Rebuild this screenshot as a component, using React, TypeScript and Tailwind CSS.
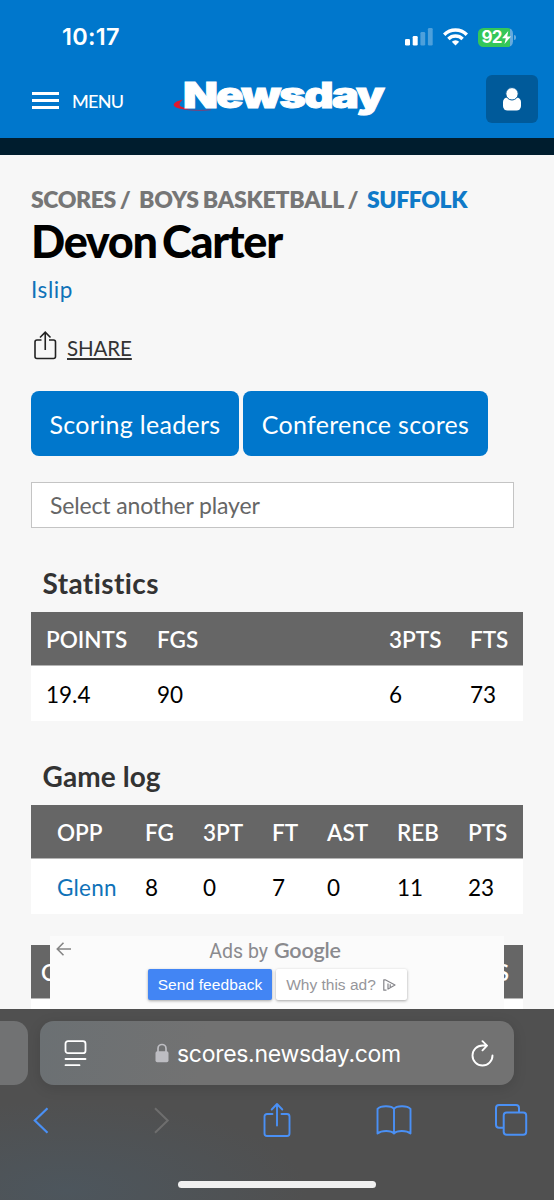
import type { ReactNode } from "react";

const stats = [
  { label: "POINTS", value: "19.4", cell: "w-[111px]" },
  { label: "FGS", value: "90", cell: "w-[232px]" },
  { label: "3PTS", value: "6", cell: "w-[81px]" },
  { label: "FTS", value: "73", cell: "w-[53px]" },
];

const gameLog = [
  { label: "OPP", value: "Glenn", cell: "w-[88px]" },
  { label: "FG", value: "8", cell: "w-[58px]" },
  { label: "3PT", value: "0", cell: "w-[69px]" },
  { label: "FT", value: "7", cell: "w-[55px]" },
  { label: "AST", value: "0", cell: "w-[70px]" },
  { label: "REB", value: "11", cell: "w-[71px]" },
  { label: "PTS", value: "23", cell: "w-[54px]" },
];

function HeadRow({ children }: { children: ReactNode }) {
  return (
    <div className="flex h-[54px] items-center border-b border-[#b5b5b5] bg-[#666] pt-[2px] text-[22.5px] font-semibold text-white">
      {children}
    </div>
  );
}

function StatusBar() {
  return (
    <div className="flex h-[74px] items-center justify-between pl-[62px] pr-[38px]">
      <span className="font-['Inter'] text-[23.5px] font-semibold tracking-[0.3px]">10:17</span>
      <div className="flex items-center">
        <svg width="28" height="18" viewBox="0 0 28 18" fill="#fff">
          <rect x="0" y="11" width="5" height="6.5" rx="1.3" />
          <rect x="7.7" y="8" width="5" height="9.5" rx="1.3" />
          <rect x="15.4" y="4" width="4.8" height="13.5" rx="1.3" opacity="0.3" />
          <rect x="22.9" y="0" width="4.8" height="17.5" rx="1.3" opacity="0.3" />
        </svg>
        <svg className="ml-[10px]" width="25" height="18" viewBox="0 0 25 18" fill="none" stroke="#fff" strokeWidth="3.4">
          <path d="M1.2 6.7a16 16 0 0 1 22.6 0" />
          <path d="M5.4 11a10 10 0 0 1 14.2 0" />
          <path d="M12.5 17.6 8.8 13.8a5.3 5.3 0 0 1 7.4 0Z" fill="#fff" stroke="none" />
        </svg>
        <div className="ml-[10px] flex h-[19px] w-[35px] items-center rounded-[5.5px] bg-[linear-gradient(90deg,#34c759_92%,#66aadd_92%)] pl-[3.5px]">
          <span className="font-['Inter'] text-[17px] font-bold leading-none tracking-[-0.9px]">92</span>
          <svg className="ml-[1px]" width="9" height="13" viewBox="0 0 9 13" fill="#fff">
            <path d="M6.3 0 0 7.3h3.8L2.5 13 9 5.4H5.2Z" />
          </svg>
        </div>
        <span className="ml-[1px] h-[5px] w-[2px] rounded-r-full bg-[#66aadd]" />
      </div>
    </div>
  );
}

function SiteNav() {
  return (
    <div className="flex h-[64px] pl-[32px] pr-[16px]">
      <div className="mt-[18px] flex h-[17px] w-[27px] flex-col justify-between">
        <span className="h-[3px] bg-white" />
        <span className="h-[3px] bg-white" />
        <span className="h-[3px] bg-white" />
      </div>
      <span className="ml-[13px] mt-[14px] w-[60px] text-[18px] font-medium leading-[27px] tracking-[-0.7px]">MENU</span>
      <svg className="ml-[40px]" width="216" height="50" viewBox="172 74 216 50">
        <path
          d="M183 99.5c-6 1.500-9.500 3.500-9.300 5.500.3 2.500 5 3.500 10.300 4.500l5-.8c-6-.8-9.500-2.200-9.500-4.200 0-1.800 1.500-3.300 3.500-5Z"
          fill="#e0182d"
        />
        <path d="M185 109.3c8 1.300 17 1.500 26 .4" fill="none" stroke="#a0315f" strokeWidth="0.8" />
        <text
          x="183"
          y="107.5"
          textLength="200"
          lengthAdjust="spacingAndGlyphs"
          fill="#fff"
          stroke="#fff"
          strokeWidth="0.9"
          className="font-['Inter'] text-[35.5px] font-black tracking-[-1.5px]"
        >
          Newsday
        </text>
      </svg>
      <div className="ml-auto mt-[1px] flex h-[48px] w-[52px] items-center justify-center rounded-[6px] bg-[#005a9a]">
        <svg width="20" height="24" viewBox="0 0 20 24" fill="#fff">
          <rect x="1" y="10.5" width="18" height="13" rx="4.5" />
          <circle cx="10" cy="6.8" r="6.2" stroke="#005a9a" strokeWidth="1" />
        </svg>
      </div>
    </div>
  );
}

function AdNotice() {
  return (
    <div className="absolute left-[50px] top-[781px] h-[73px] w-[454px] bg-[#fbfbfb] font-['Liberation_Sans']">
      <svg className="absolute left-[6px] top-[6px]" width="16" height="14" viewBox="0 0 16 14" fill="none" stroke="#858585" strokeWidth="1.6">
        <path d="M15 7H1.500M7.500 .8 1.300 7l6.200 6.200" />
      </svg>
      <div className="flex h-[31px] items-center justify-center pr-[4px] text-[#8a8a8e]">
        <span className="font-['Roboto'] text-[19.5px]">Ads by</span>
        <span className="-mt-[2px] ml-[6px] font-['Lato'] text-[21.5px] font-semibold tracking-[-0.2px]">Google</span>
      </div>
      <div className="ml-[98px] mt-[2px] flex gap-[4px] text-[15.5px]">
        <div className="flex h-[31px] w-[124px] items-center justify-center rounded-[2px] bg-[#4285f4] text-white shadow-[0_1px_3px_rgba(0,0,0,0.35)]">
          <span className="tracking-[0.1px]">Send feedback</span>
        </div>
        <div className="flex h-[31px] w-[131px] items-center justify-center gap-[7px] rounded-[2px] bg-white pr-[1px] text-[#96969b] shadow-[0_1px_3px_rgba(0,0,0,0.35)]">
          Why this ad?
          <svg width="13" height="12" viewBox="0 0 13 12" fill="none" stroke="#85858a" strokeWidth="1.2" strokeLinejoin="round">
            <path d="M3.500 11.200H.8V.8h1.400L12 6 5 10V4.500M7.200 5.200v2.800" />
          </svg>
        </div>
      </div>
    </div>
  );
}

function Player() {
  return (
    <main className="relative h-[854px] overflow-hidden bg-[#f7f7f7] px-[31px] [font-variant-ligatures:none]">
      <div className="flex h-[61px] pt-[28px] text-[23px] font-extrabold leading-[32px] tracking-[-0.4px] text-[#767676]">
        <span className="w-[108px] [word-spacing:-1px]">SCORES /</span>
        <span className="w-[228px] tracking-[-0.2px] [word-spacing:-1px]">BOYS BASKETBALL /</span>
        <span className="text-[#0f7ac8]">SUFFOLK</span>
      </div>
      <h1 className="h-[50px] text-[45px] font-black leading-[50px] tracking-[-1.3px] text-black [word-spacing:-4px]">
        Devon Carter
      </h1>
      <div className="mt-[8px] text-[22.5px] leading-[31px] tracking-[0.6px] text-[#0f72b8]">Islip</div>
      <div className="mt-[26px] flex h-[32px]">
        <svg className="ml-[3px]" width="23" height="29" viewBox="0 0 23 29" fill="none" stroke="#222" strokeWidth="1.6">
          <path d="M7.500 9H3a2 2 0 0 0-2 2v14.500a2 2 0 0 0 2 2h16.500a2 2 0 0 0 2-2V11a2 2 0 0 0-2-2H15M11.250 19V1.500M6 6.500l5.250-5.300 5.250 5.300" />
        </svg>
        <span className="ml-[10px] mt-[1px] text-[20.5px] leading-[32px] tracking-[-0.1px] text-[#333] underline underline-offset-[2px]">
          SHARE
        </span>
      </div>
      <div className="mt-[28px] flex gap-[4px] text-[25px] tracking-[0.3px] text-white">
        <div className="flex h-[65px] w-[208px] items-center justify-center rounded-[8px] bg-[#0077cc] pt-[2px]">Scoring leaders</div>
        <div className="flex h-[65px] w-[245px] items-center justify-center rounded-[8px] bg-[#0077cc] pt-[2px]">Conference scores</div>
      </div>
      <div className="mt-[26px] flex h-[46px] w-[483px] items-center border-[1.5px] border-[#c4c4c4] bg-white pl-[18px] text-[23px] tracking-[-0.15px] text-[#666]">
        Select another player
      </div>
      <h2 className="h-[84px] pl-[11.5px] pt-[35px] text-[28px] font-bold leading-[40px] tracking-[0.4px] text-[#333]">Statistics</h2>
      <HeadRow>
        {stats.map((s, i) => (
          <span key={s.label} className={`${s.cell} ${i === 0 ? "ml-[15px]" : ""}`}>
            {s.label}
          </span>
        ))}
      </HeadRow>
      <div className="flex h-[55px] items-center bg-white pl-[15px] pt-[2px] text-[22.5px] text-black">
        {stats.map((s) => (
          <span key={s.label} className={s.cell}>
            {s.value}
          </span>
        ))}
      </div>
      <h2 className="h-[84px] pl-[11.5px] pt-[35px] text-[28px] font-bold leading-[40px] tracking-[0.1px] text-[#333]">Game log</h2>
      <HeadRow>
        {gameLog.map((g, i) => (
          <span key={g.label} className={`${g.cell} shrink-0 ${i === 0 ? "ml-[26px]" : ""}`}>
            {g.label}
          </span>
        ))}
      </HeadRow>
      <div className="flex h-[55px] items-center bg-white pl-[26px] pt-[2px] text-[22.5px] text-black">
        {gameLog.map((g, i) => (
          <span key={g.label} className={`${g.cell} shrink-0 ${i === 0 ? "tracking-[0.2px] text-[#0f72b8]" : ""}`}>
            {g.value}
          </span>
        ))}
      </div>
      <div className="mt-[31px] bg-white">
        <HeadRow>
          <span className="ml-[10px]">OPP</span>
          <span className="ml-auto mr-[14px]">PTS</span>
        </HeadRow>
        <div className="h-[10px]" />
      </div>
      <AdNotice />
    </main>
  );
}

function BrowserBar() {
  return (
    <footer className="h-[191px] bg-[#505050] bg-[radial-gradient(ellipse_at_12%_95%,#4d565d_0%,transparent_35%)]">
      <div className="flex gap-[12px] pt-[12px]">
        <div className="h-[64px] w-[28px] rounded-r-[14px] bg-[#717273]" />
        <div className="flex h-[64px] w-[474px] items-center rounded-[14px] bg-[linear-gradient(100deg,#6b7073,#727272_35%)] pl-[24px] pr-[20px] shadow-[0_3px_14px_rgba(0,0,0,0.12)]">
          <svg width="23" height="27" viewBox="0 0 23 27" fill="none" stroke="#fff" strokeWidth="1.8" strokeLinecap="round">
            <rect x="1.5" y="1.2" width="20" height="12" rx="2.5" />
            <path d="M1.500 19h20M1.500 25.200h14" />
          </svg>
          <svg className="ml-[68px]" width="14" height="20" viewBox="0 0 14 20">
            <path d="M3 9V5.500a4 4 0 0 1 8 0V9" fill="none" stroke="#bdbdc2" strokeWidth="1.7" />
            <rect x="0.5" y="8.3" width="13" height="11" rx="1.8" fill="#bdbdc2" />
          </svg>
          <span className="ml-[8px] pt-[2px] font-['Inter'] text-[23px] tracking-[-0.3px] text-white">scores.newsday.com</span>
          <svg className="ml-auto" width="23" height="27" viewBox="0 0 23 27" fill="none" stroke="#fff" strokeWidth="1.9" strokeLinecap="round" strokeLinejoin="round">
            <path d="M21.500 15.500a10 10 0 1 1-10-10h4M11.500 1.200l4.500 4.500-4.500 4.600" />
          </svg>
        </div>
      </div>
      <div className="mt-[17px] flex h-[36px] items-center pl-[33px] text-[#4a90f5]">
        <svg width="16" height="27" viewBox="0 0 16 27" fill="none" stroke="currentColor" strokeWidth="2.2">
          <path d="M14.500 1.300 1.800 13.500l12.700 12.200" />
        </svg>
        <svg className="ml-[105px]" width="16" height="27" viewBox="0 0 16 27" fill="none" stroke="#6e6e6e" strokeWidth="2">
          <path d="m1 1.300 12.700 12.200L1 25.700" />
        </svg>
        <svg className="ml-[93px]" width="28" height="36" viewBox="0 0 28 36" fill="none" stroke="currentColor" strokeWidth="1.9" strokeLinecap="round" strokeLinejoin="round">
          <path d="M9.500 12H4a2.500 2.500 0 0 0-2.500 2.500v17A2.500 2.500 0 0 0 4 34h20a2.500 2.500 0 0 0 2.500-2.500v-17A2.500 2.500 0 0 0 24 12h-5.500M14 23.500V2.500M8.700 7.500 14 2l5.300 5.500" />
        </svg>
        <svg className="ml-[85px]" width="36" height="30" viewBox="0 0 36 30" fill="none" stroke="currentColor" strokeWidth="1.9" strokeLinejoin="round">
          <path d="M18 4C15.500.5 5 .2 1.500 4v24.500c4-3.300 13.500-3.300 16.500 0 3-3.300 12.500-3.300 16.500 0V4C31 .2 20.500.5 18 4ZM18 4v24.500" />
        </svg>
        <svg className="ml-[82px]" width="34" height="34" viewBox="0 0 34 34" fill="none" stroke="currentColor" strokeWidth="2">
          <rect x="9.7" y="9.5" width="22.5" height="22.3" rx="3" />
          <path d="M9.700 24.700H5a3 3 0 0 1-3-3V5a3 3 0 0 1 3-3h17a3 3 0 0 1 3 3v4.500" />
        </svg>
      </div>
      <div className="mx-auto mt-[43px] h-[7px] w-[198px] rounded-full bg-[#f0f0f0]" />
    </footer>
  );
}

export default function App() {
  return (
    <div className="h-[1200px] w-[554px] overflow-hidden font-['Lato',sans-serif]">
      <header className="h-[155px] border-b-[17px] border-[#001d2e] bg-[#0077cc] text-white">
        <StatusBar />
        <SiteNav />
      </header>
      <Player />
      <BrowserBar />
    </div>
  );
}
